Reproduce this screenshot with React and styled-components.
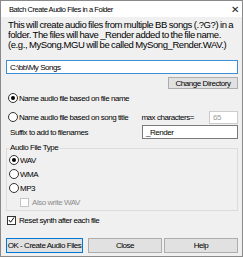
import React from "react";
import styled, { createGlobalStyle } from "styled-components";

const Global = createGlobalStyle`
  html, body { margin: 0; padding: 0; background: #fff; }
  body { font-family: "Liberation Sans", Arial, sans-serif; }
  * { box-sizing: border-box; }
`;

const Window = styled.div`
  width: 243px;
  height: 257px;
  border: 1px solid #8a8a8a;
  background: #f0f0f0;
  display: flex;
  flex-direction: column;
  font-size: 8px;
  letter-spacing: -0.45px;
  color: #000;
  overflow: hidden;
  white-space: nowrap;
`;

const TitleBar = styled.div`
  height: 16px;
  background: #fff;
  display: flex;
  align-items: center;
  justify-content: space-between;
  padding: 0 3px 0 8px;
  font-size: 7.5px;
  flex: none;
`;

const Body = styled.div`
  display: flex;
  flex-direction: column;
  padding: 3px 4px 0 5px;
  flex: 1;
`;

const Desc = styled.p`
  margin: 0 0 0 2px;
  font-size: 9.5px;
  line-height: 10px;
  letter-spacing: -0.42px;
  word-spacing: -0.4px;
`;

const TextBox = styled.div`
  height: ${(p) => p.$h || 14}px;
  width: ${(p) => (p.$w ? p.$w + "px" : "auto")};
  border: 1px solid #7a7a7a;
  border-color: ${(p) => (p.$focus ? "#3c8fd6" : p.$disabled ? "#cccccc" : "#7a7a7a")};
  background: #fff;
  display: flex;
  align-items: center;
  padding-left: 3px;
  color: ${(p) => (p.$disabled ? "#9a9a9a" : "#000")};
  flex: none;
`;

const PathBox = styled(TextBox)`
  margin-top: 10px;
`;

const RightRow = styled.div`
  display: flex;
  justify-content: flex-end;
  margin-top: 3px;
`;

const Button = styled.div`
  height: ${(p) => p.$h || 12}px;
  width: ${(p) => p.$w}px;
  margin-left: ${(p) => p.$ml || 0}px;
  background: #e1e1e1;
  border: 1px solid ${(p) => (p.$default ? "#0078d7" : "#adadad")};
  display: flex;
  align-items: center;
  justify-content: center;
  flex: none;
`;

const Row = styled.div`
  display: flex;
  align-items: center;
  height: 14px;
  margin-top: ${(p) => p.$mt || 0}px;
  padding-left: ${(p) => p.$indent || 2}px;
  color: ${(p) => (p.$disabled ? "#8d8d8d" : "#000")};
`;

const Radio = styled.span`
  width: 10px;
  height: 10px;
  border-radius: 50%;
  border: 1px solid #333;
  background: #fff;
  display: flex;
  align-items: center;
  justify-content: center;
  margin-right: 1px;
  flex: none;
  &::after {
    content: "";
    width: 4px;
    height: 4px;
    border-radius: 50%;
    background: ${(p) => (p.$on ? "#000" : "transparent")};
  }
`;

const Check = styled.span`
  width: 9px;
  height: 9px;
  border: 1px solid ${(p) => (p.$disabled ? "#c4c4c4" : "#333")};
  background: #fff;
  margin-right: 3px;
  flex: none;
  display: flex;
  align-items: center;
  justify-content: center;
`;

const Spacer = styled.span`
  flex: 1;
`;

const MaxLabel = styled.span`
  margin-right: 15px;
`;

const Group = styled.fieldset`
  margin: 4px 0 0 0;
  padding: 0;
  border: 1px solid #dcdcdc;
  display: flex;
  flex-direction: column;
  min-width: 0;
  height: 68px;
`;

const Legend = styled.legend`
  padding: 0 1px;
  margin-left: 2px;
  height: 10px;
  line-height: 10px;
`;

const ButtonRow = styled.div`
  display: flex;
  margin-top: auto;
  margin-bottom: 3px;
`;

const CloseX = styled.span`
  font-family: "DejaVu Sans", sans-serif;
  font-size: 10px;
  color: #222;
`;

export default function App() {
  return (
    <>
      <Global />
      <Window>
        <TitleBar>
          <span>Batch Create Audio Files in a Folder</span>
          <CloseX>✕</CloseX>
        </TitleBar>
        <Body>
          <Desc>
            This will create audio files from multiple BB songs (.?G?) in a<br />
            folder. The files will have _Render added to the file name.<br />
            (e.g., MySong.MGU will be called MySong_Render.WAV.)
          </Desc>
          <PathBox $focus>C:\bb\My Songs</PathBox>
          <RightRow>
            <Button $w={70}>Change Directory</Button>
          </RightRow>
          <Row $mt={2}>
            <Radio $on />
            Name audio file based on file name
          </Row>
          <Row $mt={5}>
            <Radio />
            Name audio file based on song title
            <Spacer />
            <MaxLabel>max characters=</MaxLabel>
            <TextBox $w={29} $h={13} $disabled>65</TextBox>
          </Row>
          <Row $mt={1} $indent={4}>
            Suffix to add to filenames
            <Spacer />
            <TextBox $w={96} $h={14}>_Render</TextBox>
          </Row>
          <Group>
            <Legend>Audio File Type</Legend>
            <Row>
              <Radio $on />
              WAV
            </Row>
            <Row>
              <Radio />
              WMA
            </Row>
            <Row>
              <Radio />
              MP3
            </Row>
            <Row $indent={13} $disabled>
              <Check $disabled />
              Also write WAV
            </Row>
          </Group>
          <Row $mt={2} $indent={1}>
            <Check>
              <svg width="8" height="8" viewBox="0 0 8 8">
                <path d="M1 4 L3 6.5 L7 1" fill="none" stroke="#000" strokeWidth="1.1" />
              </svg>
            </Check>
            Reset synth after each file
          </Row>
          <ButtonRow>
            <Button $w={77} $h={15} $default>OK - Create Audio Files</Button>
            <Button $w={74} $h={15} $ml={5}>Close</Button>
            <Button $w={74} $h={15} $ml={2}>Help</Button>
          </ButtonRow>
        </Body>
      </Window>
    </>
  );
}
